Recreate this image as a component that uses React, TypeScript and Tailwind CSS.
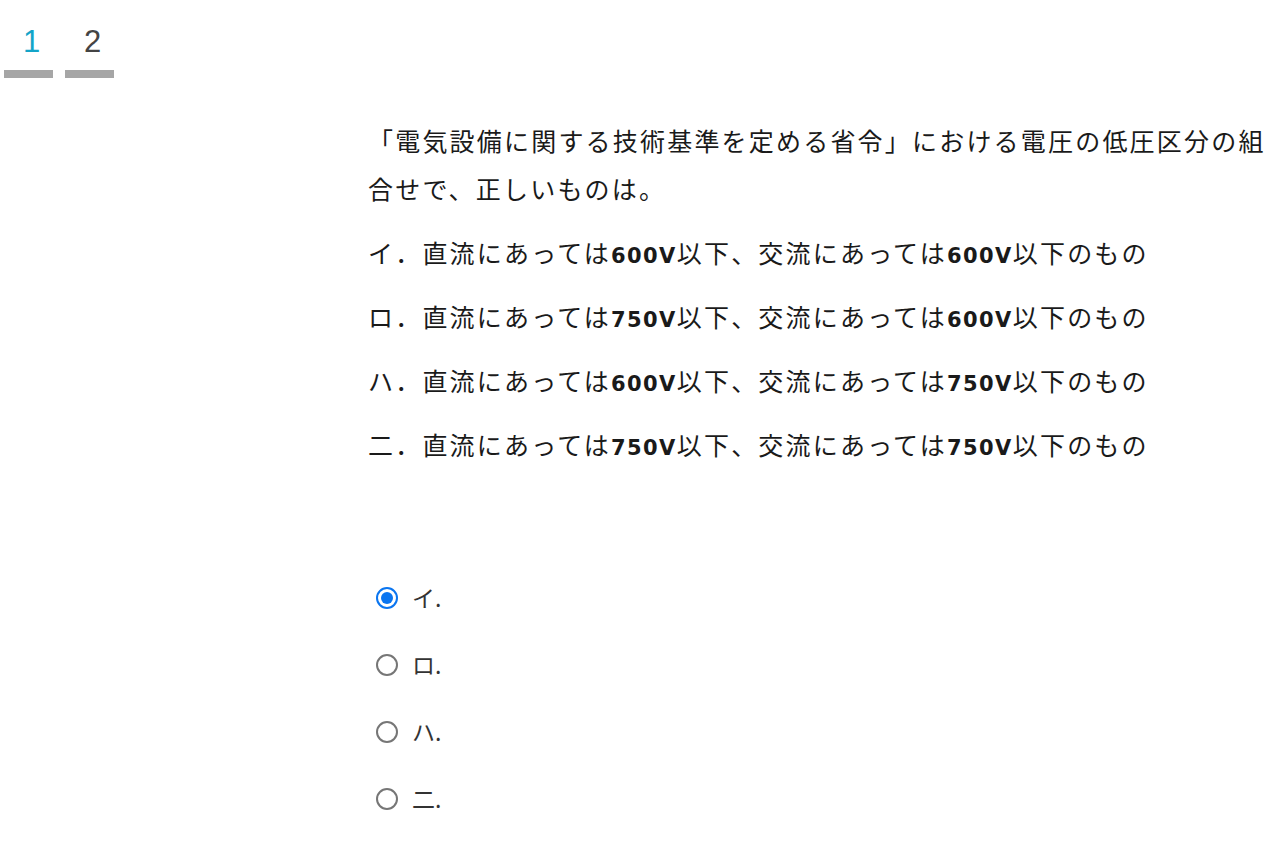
import { useState } from "react";

const OPTIONS = [
  { key: "イ", dc: "600", ac: "600" },
  { key: "ロ", dc: "750", ac: "600" },
  { key: "ハ", dc: "600", ac: "750" },
  { key: "二", dc: "750", ac: "750" },
];

const jp = "font-['Noto_Sans_CJK_JP','Noto_Sans',sans-serif]";
const num = "font-['DejaVu_Sans',sans-serif] text-[21px] leading-none font-bold tracking-[1.4px]";

export default function App() {
  const [tab, setTab] = useState(1);
  const [answer, setAnswer] = useState("イ");

  return (
    <div className={`min-h-screen bg-white text-[#1a1a1a] ${jp}`}>
      {/* Tabs */}
      <nav className="flex gap-3 px-1 pt-[22px]">
        {[1, 2].map((n) => (
          <button
            key={n}
            onClick={() => setTab(n)}
            className="flex w-[49px] flex-col items-center"
          >
            <span
              className={`pl-[6px] font-['Liberation_Sans',sans-serif] text-[31px] leading-[40px] font-light ${
                tab === n ? "text-[#14a4c8]" : "text-[#444]"
              }`}
            >
              {n}
            </span>
            <span className="mt-[8px] h-[8px] w-full bg-[#a6a6a6]" />
          </button>
        ))}
      </nav>

      {/* Question */}
      <main className="ml-[368px] mt-[38px] w-[910px]">
        <p className="mb-4 text-[25px] leading-[48px] tracking-[2.2px]">
          「電気設備に関する技術基準を定める省令」における電圧の低圧区分の組
          <br />
          合せで、正しいものは。
        </p>
        {OPTIONS.map((o) => (
          <p key={o.key} className="mb-4 h-[48px] text-[25px] leading-[48px] tracking-[2.2px]">
            {o.key}．直流にあっては<span className={num}>{o.dc}V</span>以下、交流にあっては
            <span className={num}>{o.ac}V</span>以下のもの
          </p>
        ))}

        {/* Answers */}
        <div className="mt-[96px] flex flex-col">
          {OPTIONS.map((o) => {
            const checked = answer === o.key;
            return (
              <label
                key={o.key}
                className="flex h-[67px] cursor-pointer items-center gap-[14px] pl-[8px]"
                onClick={() => setAnswer(o.key)}
              >
                <span
                  className={`flex h-[22px] w-[22px] items-center justify-center rounded-full border-2 ${
                    checked ? "border-[#0a75f0]" : "border-[#767676]"
                  }`}
                >
                  {checked && <span className="h-[12px] w-[12px] rounded-full bg-[#0a75f0]" />}
                </span>
                <span className="text-[23px] text-[#333]">{o.key}.</span>
              </label>
            );
          })}
        </div>
      </main>
    </div>
  );
}
